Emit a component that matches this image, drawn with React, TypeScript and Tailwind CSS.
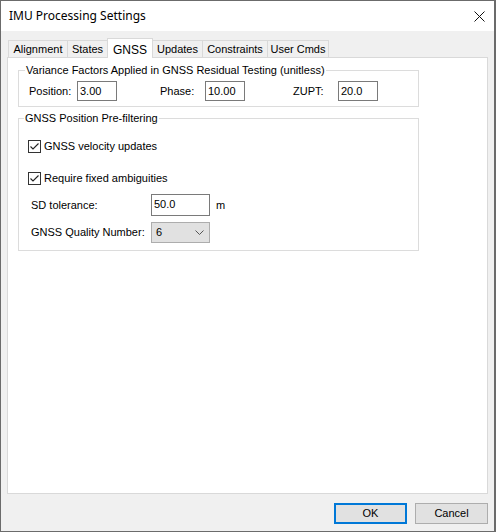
import React from "react";

const TABS = [
  { label: "Alignment", w: "w-[60px]" },
  { label: "States", w: "w-[41px]" },
  { label: "GNSS", w: "w-[46px]", active: true },
  { label: "Updates", w: "w-[51px]" },
  { label: "Constraints", w: "w-[66px]" },
  { label: "User Cmds", w: "w-[62px]" },
];

const TextBox = ({ value, className = "" }: { value: string; className?: string }) => (
  <div
    className={`flex items-center border border-[#7a7a7a] bg-white pl-[2px] text-[11px] text-black ${className}`}
  >
    {value}
  </div>
);

const CheckBox = ({ label }: { label: string }) => (
  <div className="flex items-center h-[13px]">
    <div className="w-[13px] h-[13px] border border-[#333333] bg-white flex items-center justify-center">
      <svg width="11" height="11" viewBox="0 0 11 11">
        <path d="M1.5 5.5 L4 8 L9.5 2.5" fill="none" stroke="#222" strokeWidth="1.1" />
      </svg>
    </div>
    <span className="ml-[3px]">{label}</span>
  </div>
);

export default function App() {
  return (
    <div
      className="w-[496px] h-[532px] border border-r-2 border-[#6b6b6b] flex flex-col bg-white text-black"
      style={{ fontFamily: '"Liberation Sans", Arial, sans-serif' }}
    >
      {/* Title bar */}
      <div className="h-[30px] bg-white flex items-center justify-between pl-[8px] pr-[9px]">
        <span
          className="text-[12px] text-black"
          style={{ fontFamily: '"Noto Sans", "Open Sans", sans-serif' }}
        >
          IMU Processing Settings
        </span>
        <svg width="11" height="11" viewBox="0 0 11 11">
          <path d="M0.5 0.5 L10.5 10.5 M10.5 0.5 L0.5 10.5" stroke="#111" strokeWidth="1" />
        </svg>
      </div>

      {/* Body */}
      <div className="flex-1 bg-[#f0f0f0] flex flex-col px-[6px] pt-[7px] pb-[7px] text-[11px]">
        {/* Tabs */}
        <div className="flex items-end h-[19px] pl-[1px]">
          {TABS.map((t, i) => (
            <div
              key={t.label}
              className={`${t.w} ${i > 0 ? "-ml-px" : ""} border border-b-0 border-[#d9d9d9] flex justify-center ${
                t.active
                  ? "h-[20px] -mb-px bg-white relative z-10 items-start pt-[2px] text-[12px]"
                  : "h-[17px] bg-[#f0f0f0] items-center"
              }`}
            >
              {t.label}
            </div>
          ))}
        </div>

        {/* Panel */}
        <div className="flex-1 border border-[#d9d9d9] bg-white px-[10px] pt-[6px]">
          <fieldset className="w-[401px] border border-[#dcdcdc] pb-[5px]">
            <legend className="ml-[6px] px-[1px] leading-[13px]">
              Variance Factors Applied in GNSS Residual Testing (unitless)
            </legend>
            <div className="flex items-center mt-[4px] pl-[10px]">
              <span className="w-[48px]">Position:</span>
              <TextBox value="3.00" className="w-[40px] h-[20px]" />
              <span className="ml-[43px] w-[45px]">Phase:</span>
              <TextBox value="10.00" className="w-[40px] h-[20px]" />
              <span className="ml-[48px] w-[45px]">ZUPT:</span>
              <TextBox value="20.0" className="w-[40px] h-[20px]" />
            </div>
          </fieldset>

          <fieldset className="w-[401px] border border-[#dcdcdc] mt-[5px] pb-[7px]">
            <legend className="ml-[5px] px-[1px] leading-[13px]">GNSS Position Pre-filtering</legend>
            <div className="flex flex-col pl-[9px]">
              <div className="mt-[15px]">
                <CheckBox label="GNSS velocity updates" />
              </div>
              <div className="mt-[19px]">
                <CheckBox label="Require fixed ambiguities" />
              </div>
              <div className="flex items-center mt-[9px] pl-[3px]">
                <span className="w-[120px]">SD tolerance:</span>
                <TextBox value="50.0" className="w-[59px] h-[22px] items-start pt-[1px]" />
                <span className="ml-[6px]">m</span>
              </div>
              <div className="flex items-center mt-[6px] pl-[3px]">
                <span className="w-[120px]">GNSS Quality Number:</span>
                <div className="w-[59px] h-[21px] border border-[#adadad] bg-[#e1e1e1] flex items-center justify-between pl-[4px] pr-[5px]">
                  <span>6</span>
                  <svg width="9" height="6" viewBox="0 0 9 6">
                    <path d="M0.5 0.5 L4.5 4.5 L8.5 0.5" fill="none" stroke="#555" strokeWidth="1" />
                  </svg>
                </div>
              </div>
            </div>
          </fieldset>
        </div>

        {/* Buttons */}
        <div className="flex justify-end gap-[8px] mt-[9px] pr-[0px]">
          <button className="w-[73px] h-[21px] border-2 border-[#0078d7] bg-[#e1e1e1] flex items-center justify-center">
            OK
          </button>
          <button className="w-[73px] h-[21px] border border-[#adadad] bg-[#e1e1e1] flex items-center justify-center">
            Cancel
          </button>
        </div>
      </div>
    </div>
  );
}
